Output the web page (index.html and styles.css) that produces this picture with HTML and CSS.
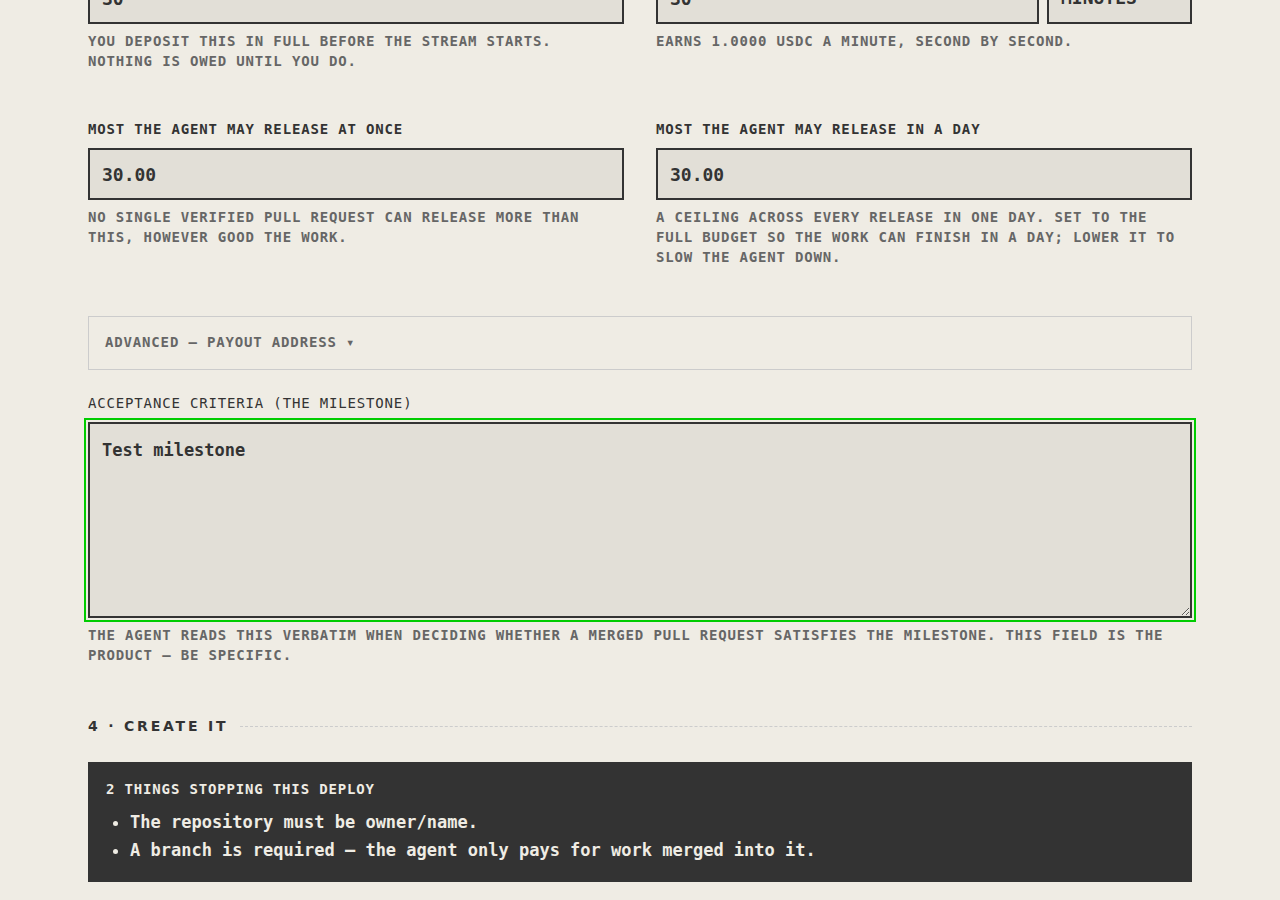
FILE: index.html
```html
<!DOCTYPE html>
<html lang="en">
<head>
  <meta charset="UTF-8">
  <meta name="viewport" content="width=device-width, initial-scale=1">
  <title>Create a stream</title>
  <link rel="stylesheet" href="styles.css">
</head>
<body>
  <main class="page">
    <form>
      <div class="row">
        <div class="field">
          <input type="text" id="budget" aria-label="Budget" aria-describedby="budget-hint" value="30">
          <p class="hint" id="budget-hint">You deposit this in full before the stream starts. Nothing is owed until you do.</p>
        </div>
        <div class="field">
          <div class="duration">
            <input type="text" id="duration" aria-label="Duration" value="30">
            <select id="unit" aria-label="Duration unit">
              <option>minutes</option>
              <option>hours</option>
              <option>days</option>
            </select>
          </div>
          <p class="hint">Earns 1.0000 USDC a minute, second by second.</p>
        </div>
      </div>

      <div class="row">
        <div class="field">
          <label for="max-once">Most the agent may release at once</label>
          <input type="text" id="max-once" value="30.00">
          <p class="hint">No single verified pull request can release more than this, however good the work.</p>
        </div>
        <div class="field">
          <label for="max-day">Most the agent may release in a day</label>
          <input type="text" id="max-day" value="30.00">
          <p class="hint">A ceiling across every release in one day. Set to the full budget so the work can finish in a day; lower it to slow the agent down.</p>
        </div>
      </div>

      <details class="advanced">
        <summary>Advanced — payout address ▾</summary>
      </details>

      <div class="field criteria">
        <label for="criteria">Acceptance criteria (the milestone)</label>
        <textarea id="criteria" class="focused" spellcheck="false">Test milestone</textarea>
        <p class="hint">The agent reads this verbatim when deciding whether a merged pull request satisfies the milestone. This field is the product — be specific.</p>
      </div>

      <h2 class="step">4 · Create it</h2>

      <section class="blockers">
        <h3>2 things stopping this deploy</h3>
        <ul>
          <li>The repository must be owner/name.</li>
          <li>A branch is required — the agent only pays for work merged into it.</li>
        </ul>
      </section>
    </form>
  </main>
</body>
</html>
```

FILE: styles.css
```css
:root {
  --paper: #efece4;
  --field: #e2dfd7;
  --ink: #333333;
  --muted: #666666;
  --line: #cccccc;
  --focus: #00cc00;
}

* {
  box-sizing: border-box;
}

body {
  margin: 0;
  overflow: hidden;
  background: var(--paper);
  color: var(--ink);
  font-family: "DejaVu Sans Mono", monospace;
  font-size: 17px;
  font-weight: bold;
  line-height: 28px;
}

.page {
  max-width: 1200px;
  margin: -28px auto 0;
  padding: 0 48px 18px;
}

.row {
  display: grid;
  grid-template-columns: 1fr 1fr;
  gap: 32px;
  margin-bottom: 48px;
}

label,
.hint,
.advanced,
.step,
.blockers h3 {
  font-size: 14px;
  line-height: 20px;
  letter-spacing: 0.06em;
  text-transform: uppercase;
}

label {
  display: block;
  margin-bottom: 9px;
}

.hint {
  margin: 7px 0 0;
  color: var(--muted);
}

input,
select,
textarea {
  display: block;
  width: 100%;
  height: 52px;
  padding: 0 12px;
  border: 2px solid var(--ink);
  border-radius: 0;
  background: var(--field);
  color: var(--ink);
  font: inherit;
  font-size: 18px;
}

select {
  appearance: none;
  text-transform: uppercase;
}

.duration {
  display: grid;
  grid-template-columns: 1fr 145px;
  gap: 8px;
}

.advanced {
  margin: 49px 0 23px;
  padding: 15px 16px 17px;
  border: 1px solid var(--line);
  color: var(--muted);
}

.advanced summary {
  list-style: none;
  cursor: pointer;
}

.criteria label {
  font-weight: normal;
}

textarea {
  height: 196px;
  padding: 12px;
  font-size: 17px;
  resize: vertical;
}

.focused,
textarea:focus {
  outline: 2px solid var(--focus);
  outline-offset: 2px;
}

.step {
  display: flex;
  align-items: center;
  gap: 12px;
  margin: 51px 0 26px;
  font-family: "DejaVu Sans", sans-serif;
  letter-spacing: 0.2em;
}

.step::after {
  content: "";
  flex: 1;
  border-top: 1px dashed var(--line);
}

.blockers {
  padding: 17px 18px 18px;
  background: var(--ink);
  color: var(--paper);
}

.blockers h3 {
  margin: 0 0 9px;
}

.blockers ul {
  margin: 0;
  padding-left: 24px;
}
```
